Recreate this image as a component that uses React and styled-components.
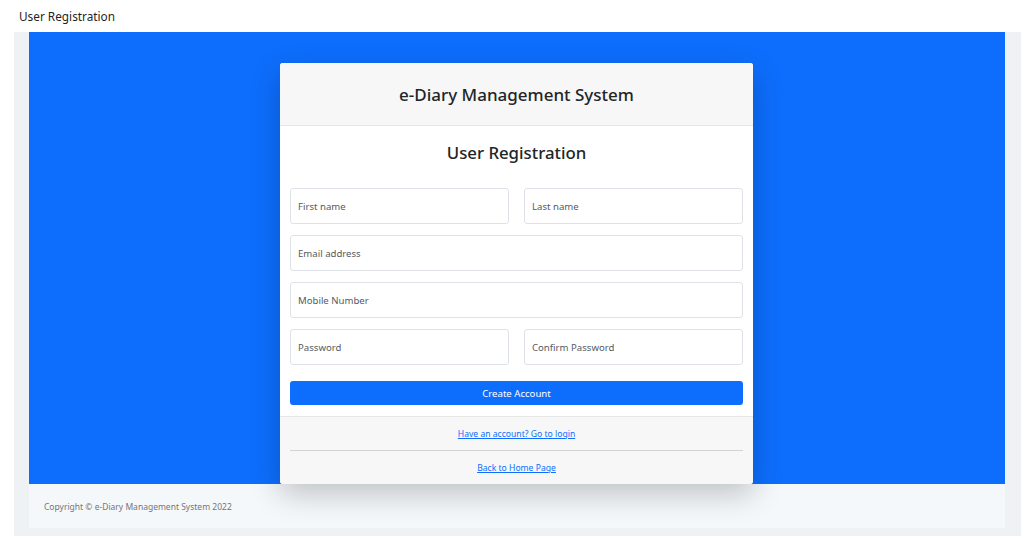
import React from "react";
import styled, { createGlobalStyle } from "styled-components";

const GlobalStyle = createGlobalStyle`
  html, body {
    margin: 0;
    padding: 0;
    background: #ffffff;
    font-family: "Noto Sans", "Open Sans", sans-serif;
    color: #212529;
  }
  * {
    box-sizing: border-box;
  }
`;

const fields = [
  ["First name", "Last name"],
  ["Email address"],
  ["Mobile Number"],
  ["Password", "Confirm Password"],
];

const App = () => {
  return (
    <>
      <GlobalStyle />
      <PageTitle>User Registration</PageTitle>
      <Frame>
        <Hero>
          <Card>
            <CardHeader>
              <Brand>e-Diary Management System</Brand>
            </CardHeader>
            <CardBody>
              <FormTitle>User Registration</FormTitle>
              <Form onSubmit={(e) => e.preventDefault()}>
                {fields.map((row) => (
                  <FieldRow key={row.join("-")} $cols={row.length}>
                    {row.map((label) => (
                      <Input
                        key={label}
                        placeholder={label}
                        type={label.includes("Password") ? "password" : "text"}
                      />
                    ))}
                  </FieldRow>
                ))}
                <SubmitButton type="submit">Create Account</SubmitButton>
              </Form>
            </CardBody>
            <CardFooter>
              <FooterLink>
                <a href="#login">Have an account? Go to login</a>
              </FooterLink>
              <Divider />
              <FooterLink>
                <a href="#home">Back to Home Page</a>
              </FooterLink>
            </CardFooter>
          </Card>
        </Hero>
        <SiteFooter>Copyright &copy; e-Diary Management System 2022</SiteFooter>
      </Frame>
    </>
  );
};

export default App;

const PageTitle = styled.div`
  height: 32px;
  display: flex;
  align-items: center;
  padding-left: 19px;
  font-size: 11.8px;
  color: #1f1f1f;
`;

const Frame = styled.div`
  margin-left: 14px;
  width: 1007px;
  background: #eff2f5;
  padding: 0 16px 8px 15px;
`;

const Hero = styled.section`
  height: 452px;
  background: #0d6efd;
  display: flex;
  justify-content: center;
  align-items: flex-start;
  padding: 31px 1px 0 0;
`;

const Card = styled.div`
  position: relative;
  z-index: 1;
  width: 473px;
  height: 421px;
  background: #ffffff;
  border-radius: 3px;
  box-shadow: 0 10px 30px rgba(0, 0, 0, 0.22);
  display: flex;
  flex-direction: column;
  overflow: hidden;
`;

const CardHeader = styled.div`
  height: 63px;
  background: #f7f7f7;
  border-bottom: 1px solid #e6e6e6;
  display: flex;
  align-items: center;
  justify-content: center;
`;

const Brand = styled.h3`
  margin: 0;
  font-size: 17px;
  font-weight: 500;
  color: #212529;
`;

const CardBody = styled.div`
  padding: 13px 10px 11px;
`;

const FormTitle = styled.h3`
  margin: 0 0 22px;
  height: 27px;
  line-height: 27px;
  text-align: center;
  font-size: 16.8px;
  font-weight: 500;
  color: #212529;
`;

const Form = styled.form`
  display: flex;
  flex-direction: column;
  gap: 11px;
`;

const FieldRow = styled.div`
  display: grid;
  grid-template-columns: repeat(${(p) => p.$cols}, 1fr);
  column-gap: 15px;
`;

const Input = styled.input`
  height: 36px;
  width: 100%;
  border: 1px solid #dee2e6;
  border-radius: 3px;
  padding: 0 7px;
  font-family: inherit;
  font-size: 9.6px;
  color: #212529;
  background: #ffffff;
  outline: none;

  &::placeholder {
    color: #555b61;
  }
`;

const SubmitButton = styled.button`
  margin-top: 5px;
  height: 24px;
  border: none;
  border-radius: 3px;
  background: #0d6efd;
  color: #ffffff;
  font-family: inherit;
  font-size: 9.6px;
  cursor: pointer;
`;

const CardFooter = styled.div`
  flex: 1;
  background: #f7f7f7;
  border-top: 1px solid #e6e6e6;
  padding: 0 10px;
  display: flex;
  flex-direction: column;
`;

const FooterLink = styled.div`
  flex: 1;
  display: flex;
  align-items: center;
  justify-content: center;
  font-size: 8.6px;

  a {
    color: #0d6efd;
    text-decoration: underline;
  }
`;

const Divider = styled.hr`
  margin: 0;
  border: none;
  border-top: 1px solid #d4d4d4;
`;

const SiteFooter = styled.footer`
  height: 44px;
  background: #f5f8fb;
  display: flex;
  align-items: center;
  padding-left: 15px;
  font-size: 8.5px;
  color: #757575;
`;
